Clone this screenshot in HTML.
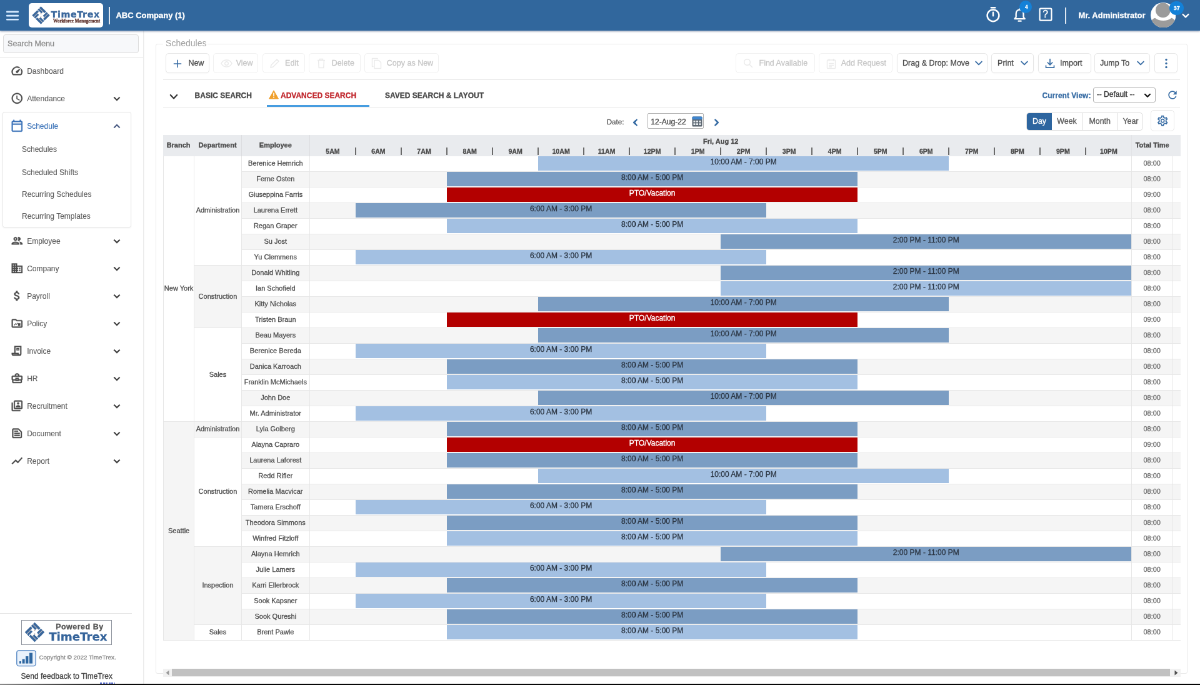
<!DOCTYPE html>
<html lang="en"><head><meta charset="utf-8"><title>TimeTrex - Schedules</title>
<style>
html,body{margin:0;padding:0;width:1200px;height:685px;overflow:hidden;background:#fff;}
body{font-family:"Liberation Sans",Arial,sans-serif;color:#444;}
#app{position:absolute;left:0;top:0;width:1920px;height:1096px;transform:scale(0.625);transform-origin:0 0;background:#fff;overflow:hidden;will-change:transform;-webkit-text-stroke:.3px;}
#app *{box-sizing:border-box;}
.abs{position:absolute;}
/* top bar */
#topbar{position:absolute;left:0;top:0;width:1920px;height:48.6px;background:#31679d;box-shadow:0 1px 3px rgba(25,50,95,.55);z-index:5;}
#topbar .logo{position:absolute;left:46px;top:4.8px;width:118.6px;height:39.6px;background:#fff;border-radius:5px;}
#topbar .vdiv{position:absolute;width:1.6px;background:#dfe8f2;}
#topbar .co{position:absolute;left:185.4px;top:0;height:48.6px;line-height:49.6px;font-size:13px;font-weight:bold;color:#fff;white-space:nowrap;}
#topbar .user{position:absolute;left:1725.4px;top:0;height:48.6px;line-height:49.6px;font-size:13px;font-weight:bold;color:#fff;white-space:nowrap;}
.badge{position:absolute;border-radius:50%;background:#1381d8;color:#fff;font-weight:bold;text-align:center;}
/* sidebar */
#sidebar{position:absolute;left:0;top:48.6px;width:229.6px;height:1048px;background:#fff;border-right:1.600px solid #ebebeb;box-shadow:1px 0 5px rgba(0,0,0,.07);}
#sidebar .search{position:absolute;left:5.3px;top:6.8px;width:217px;height:30px;border:1.3px solid #dcdcdc;border-radius:4px;background:#f7f8fa;font-size:12.600px;line-height:28.600px;padding-left:5.800px;color:#8c8c8c;}
#sidebar .hl{position:absolute;left:0;height:1.3px;background:#e4e4e4;}
.mi{position:absolute;left:0;width:229px;height:44px;line-height:44px;font-size:12px;color:#5c5c5c;white-space:nowrap;-webkit-text-stroke:.12px;}
.mi .tx{position:absolute;left:43.2px;top:0;}
.mi svg.ic{position:absolute;left:16.9px;top:11.7px;width:20.6px;height:20.6px;}
.mi svg.ch{position:absolute;left:177.2px;top:12.4px;width:20px;height:20px;}
.smi{position:absolute;left:35px;height:35px;line-height:35px;font-size:12px;color:#5c5c5c;white-space:nowrap;-webkit-text-stroke:.12px;}
.schedbox{position:absolute;left:3.8px;top:130.6px;width:206px;height:184.8px;border:1.3px solid #e6e6e6;border-radius:3px;box-shadow:0 1px 3px rgba(0,0,0,.05);}
/* content */
#content{position:absolute;left:231.2px;top:48.6px;width:1688.8px;height:1048px;background:#fff;}
.fs{position:absolute;left:249.3px;top:70px;width:1650.7px;height:1008px;border:1.4px solid #e9e9e9;border-radius:3px;}
.legend{position:absolute;left:260.5px;top:57.6px;padding:0 2px 0 4.600px;background:#fff;font-size:14px;line-height:22px;color:#a0a0a0;-webkit-text-stroke:0;}
.btn{position:absolute;top:84.8px;height:32.6px;border:1.3px solid #e6e6e6;border-radius:5px;background:#fff;font-size:12.5px;line-height:31.6px;color:#4a4a4a;white-space:nowrap;box-shadow:0 1px 2px rgba(0,0,0,.03);}
.btn.dis{color:#c6c6c6;border-color:#f0f0f0;box-shadow:none;}
.btn .tx{position:absolute;top:0;margin-left:-.9px;}
.btn svg{position:absolute;}
.hline{position:absolute;height:1.3px;background:#e6e6e6;}
.tab{position:absolute;top:141.8px;height:22px;line-height:22px;font-size:12px;font-weight:bold;color:#484848;white-space:nowrap;}
/* grid */
.grid{position:absolute;font-size:11px;color:#4c4c4c;}
.ghead{position:absolute;left:0;top:0;background:#e9ebee;}
.hc{position:absolute;top:0;height:100%;line-height:33px;text-align:center;font-weight:bold;font-size:11px;color:#4a4a4a;white-space:nowrap;}
.hc.hb{border-left:1.3px solid #dcdde0;border-right:1.3px solid #dcdde0;}
.hc.hl{border-left:1.3px solid #e2e3e6;}
.hdate{position:absolute;top:3px;height:14px;line-height:14px;text-align:center;font-weight:bold;font-size:11px;color:#4a4a4a;}
.hr{position:absolute;top:17.6px;height:16px;line-height:16px;text-align:center;font-weight:bold;font-size:10.6px;color:#4a4a4a;}
.sep{position:absolute;top:19.6px;width:1.8px;height:12.6px;background:#6a6a6a;}
.gbody{position:absolute;left:0;background:#fff;}
.row{position:absolute;left:0;width:100%;height:25px;border-bottom:1.3px solid #e7e7e7;background:#fff;}
.row.alt{background:#f5f5f5;}
.emp,.tt{position:absolute;top:0;height:25px;line-height:23.4px;text-align:center;white-space:nowrap;}
.emp{border-left:1.3px solid #e6e6e6;border-right:1.3px solid #e6e6e6;}
.tt{border-left:1.3px solid #e6e6e6;border-right:1.3px solid #e6e6e6;color:#6c6c6c;}
.bar{position:absolute;top:.3px;height:23.5px;line-height:18.8px;text-align:center;font-size:12px;color:#2b3542;white-space:nowrap;}
.bar.lt{background:#a3c0e2;}
.bar.dk{background:#7b9dc3;}
.bar.pto{background:#b30000;color:#fff;}
.mc{position:absolute;text-align:center;background:#fff;border-bottom:1.3px solid #e7e7e7;border-left:1.3px solid #e6e6e6;white-space:nowrap;}
.mc.alt{background:#f5f5f5;}
.pb{position:absolute;left:33.6px;top:943.4px;width:145.6px;height:39.6px;border:1.3px solid #8d929c;background:#fff;}
.pb1{left:54.600px;top:3px;font-size:12.400px;line-height:14px;font-weight:bold;color:#555;white-space:nowrap;letter-spacing:.55px}
.pb2{left:43.600px;top:15px;font-family:'DejaVu Sans','Liberation Sans',sans-serif;font-size:18.200px;line-height:22px;font-weight:bold;color:#35649b;white-space:nowrap;}
.seg{position:absolute;border:1.3px solid #dcdcdc;border-radius:5px;background:#fff;overflow:hidden;}
.sg{position:absolute;top:0;height:100%;line-height:26px;text-align:center;font-size:12.4px;color:#5a5a5a;border-right:1.3px solid #dcdcdc;}
.sg.on{background:#2d659f;color:#fff;border-right:none;}

</style></head>
<body>
<div id="app">
<div id="topbar">
<svg class="abs" style="left:7.800px;top:14px;width:26px;height:22px" viewBox="0 0 26 22"><g fill="#d6e9ff"><rect x="2" y="3.6" width="20" height="2.6" rx="1"/><rect x="2" y="9.8" width="20" height="2.6" rx="1"/><rect x="2" y="16" width="20" height="2.6" rx="1"/></g></svg>
<div class="logo">
<svg class="abs" style="left:3.4px;top:3.3px;width:33px;height:33px" viewBox="-16.5 -16.5 33 33"><g transform="rotate(45) scale(0.84)"><g fill="#3a679c"><rect x="-12" y="-12" width="14" height="4.200"/><rect x="-12" y="-7" width="10" height="3.800"/><rect x="7.800" y="-12" width="4.200" height="14"/><rect x="3.200" y="-12" width="3.800" height="10"/><rect x="-2" y="7.800" width="14" height="4.200"/><rect x="2" y="3.200" width="10" height="3.800"/><rect x="-12" y="-2" width="4.200" height="14"/><rect x="-7" y="2" width="3.800" height="10"/></g><g fill="#a9a3a8"><rect x="-12" y="-7.800" width="12" height=".8"/><rect x="7" y="-12" width=".8" height="12"/><rect x="0" y="7" width="12" height=".8"/><rect x="-7.800" y="0" width=".8" height="12"/><rect x="-3.200" y="-3.200" width="2" height="2" fill="#c3b3ad"/><rect x="1.200" y="1.200" width="2" height="2" fill="#c3b3ad"/></g></g></svg>
<div class="abs" style="left:35.600px;top:8.800px;font-family:'DejaVu Sans','Liberation Sans',sans-serif;font-size:14.300px;line-height:18px;font-weight:bold;color:#3a679c;letter-spacing:.62px;white-space:nowrap">TimeTrex</div>
<div class="abs" style="left:39px;top:24.800px;font-family:'Liberation Serif',serif;font-size:7.200px;line-height:9px;font-weight:bold;color:#5a2d27;white-space:nowrap">Workforce Management</div>
</div>
<div class="vdiv" style="left:174.4px;top:10.6px;height:28.4px"></div>
<div class="co">ABC Company (1)</div>
<!-- stopwatch -->
<svg class="abs" style="left:1575.200px;top:8px;width:28px;height:30px" viewBox="0 0 28 30" fill="none" stroke="#fff" stroke-width="2.500" stroke-linecap="round"><circle cx="14" cy="16.800" r="9.400"/><path d="M14 11.800v5.400M10.800 4.200h6.400" /></svg>
<!-- bell -->
<svg class="abs" style="left:1618.800px;top:10.800px;width:25.200px;height:27px" viewBox="0 0 28 30" fill="none" stroke="#fff" stroke-width="2.600" stroke-linejoin="round" stroke-linecap="round"><path d="M14 5.2c-4.3 0-6.6 3.2-6.6 7.2v5.8l-2.4 3h18l-2.4-3v-5.800c0-4-2.300-7.200-6.600-7.200zM14 3.400v1.600"/><path d="M11.800 25.200h4.400" stroke-width="2.6"/></svg>
<div class="badge" style="left:1631px;top:1.400px;width:20px;height:20px;line-height:20px;font-size:8.600px;padding-left:3px">4</div>
<!-- help -->
<svg class="abs" style="left:1658.600px;top:9.400px;width:28px;height:28px" viewBox="0 0 28 28" fill="none" stroke="#fff" stroke-width="2.200"><rect x="4.600" y="4.600" width="18.800" height="19" rx="1.500"/></svg>
<div class="abs" style="left:1658.600px;top:9.400px;width:28px;height:28px;line-height:28.400px;text-align:center;font-size:15.600px;font-weight:normal;color:#fff">?</div>
<div class="vdiv" style="left:1704px;top:12px;height:26px"></div>
<div class="user">Mr. Administrator</div>
<!-- avatar -->
<svg class="abs" style="left:1840.6px;top:3.8px;width:40.4px;height:40.4px" viewBox="0 0 40 40"><defs><clipPath id="avc"><circle cx="20" cy="20" r="20"/></clipPath></defs><g clip-path="url(#avc)"><rect width="40" height="40" fill="#fff"/><circle cx="19.600" cy="12.200" r="11.700" fill="#9b9b9b"/><path d="M-2 41c0-9 4-15.500 9-16.500 3.500 3 8 4.200 13 4.200s9.500-1.200 13-4.200c5 1 9 7.500 9 16.500z" fill="#9b9b9b"/></g></svg>
<div class="badge" style="left:1871.400px;top:1.600px;width:22.800px;height:22.800px;line-height:22.800px;font-size:9px">37</div>
<svg class="abs" style="left:1888px;top:17.600px;width:18px;height:14px" viewBox="0 0 18 14" fill="none" stroke="#fff" stroke-width="2.400" stroke-linecap="round" stroke-linejoin="round"><path d="M4.600 5l4.400 4.400 4.400-4.400"/></svg>
</div>
<div id="sidebar">
<div class="search">Search Menu</div>
<div class="hl" style="top:42px;width:229px"></div>
<div class="schedbox"></div>
<div class="mi" style="top:43px"><svg class="ic" viewBox="0 0 24 24" fill="#4a4a4a" stroke="#4a4a4a" stroke-width=".45" stroke-linejoin="round"><path d="M20.380 8.570l-1.230 1.850a8 8 0 0 1-.220 7.580H5.070A8 8 0 0 1 15.580 6.850l1.850-1.230A10 10 0 0 0 3.350 19a2 2 0 0 0 1.720 1h13.850a2 2 0 0 0 1.740-1 10 10 0 0 0-.270-10.440zm-9.790 6.840a2 2 0 0 0 2.830 0l5.660-8.490-8.490 5.660a2 2 0 0 0 0 2.830z"/></svg><span class="tx">Dashboard</span></div>
<div class="mi" style="top:87px"><svg class="ic" viewBox="0 0 24 24" fill="#4a4a4a" stroke="#4a4a4a" stroke-width=".45" stroke-linejoin="round"><path d="M11.990 2C6.470 2 2 6.480 2 12s4.470 10 9.990 10C17.520 22 22 17.520 22 12S17.520 2 11.990 2zM12 20c-4.420 0-8-3.580-8-8s3.580-8 8-8 8 3.580 8 8-3.580 8-8 8zm.5-13H11v6l5.250 3.150.750-1.230-4.500-2.670z"/></svg><span class="tx">Attendance</span><svg class="ch" viewBox="0 0 24 24" fill="#333" stroke="#333" stroke-width=".7"><path d="M16.590 8.590L12 13.170 7.410 8.590 6 10l6 6 6-6z"/></svg></div>
<div class="mi" style="top:131px;color:#3a72b8"><svg class="ic" viewBox="0 0 24 24" fill="#3a72b8" stroke="#3a72b8" stroke-width=".45" stroke-linejoin="round"><path d="M20 3h-1V1h-2v2H7V1H5v2H4c-1.100 0-2 .9-2 2v16c0 1.100.9 2 2 2h16c1.100 0 2-.9 2-2V5c0-1.100-.9-2-2-2zm0 18H4V10h16v11zm0-13H4V5h16v3z"/></svg><span class="tx">Schedule</span><svg class="ch" viewBox="0 0 24 24" fill="#3d4f7a" stroke="#3d4f7a" stroke-width=".7"><path d="M12 8l-6 6 1.410 1.410L12 10.830l4.590 4.580L18 14z"/></svg></div>
<div class="mi" style="top:315px"><svg class="ic" viewBox="0 0 24 24" fill="#4a4a4a" stroke="#4a4a4a" stroke-width=".45" stroke-linejoin="round"><path d="M9 13.750c-2.340 0-7 1.170-7 3.500V19h14v-1.750c0-2.330-4.660-3.500-7-3.500zM4.340 17c.840-.580 2.870-1.250 4.660-1.250s3.820.670 4.660 1.250H4.340zM9 12c1.930 0 3.500-1.570 3.500-3.500S10.930 5 9 5 5.500 6.570 5.500 8.500 7.070 12 9 12zm0-5c.830 0 1.500.670 1.500 1.500S9.830 10 9 10s-1.500-.670-1.500-1.500S8.170 7 9 7zm7.040 6.810c1.160.840 1.960 1.960 1.960 3.440V19h4v-1.750c0-2.020-3.500-3.170-5.960-3.440zM15 12c1.930 0 3.500-1.570 3.500-3.500S16.930 5 15 5c-.540 0-1.040.130-1.500.350.630.890 1 1.980 1 3.150s-.370 2.260-1 3.150c.460.220.960.350 1.500.350z"/></svg><span class="tx">Employee</span><svg class="ch" viewBox="0 0 24 24" fill="#333" stroke="#333" stroke-width=".7"><path d="M16.590 8.590L12 13.170 7.410 8.590 6 10l6 6 6-6z"/></svg></div>
<div class="mi" style="top:359px"><svg class="ic" viewBox="0 0 24 24" fill="#4a4a4a" stroke="#4a4a4a" stroke-width=".45" stroke-linejoin="round"><path d="M12 7V3H2v18h20V7H12zM6 19H4v-2h2v2zm0-4H4v-2h2v2zm0-4H4V9h2v2zm0-4H4V5h2v2zm4 12H8v-2h2v2zm0-4H8v-2h2v2zm0-4H8V9h2v2zm0-4H8V5h2v2zm10 12h-8v-2h2v-2h-2v-2h2v-2h-2V9h8v10zm-2-8h-2v2h2v-2zm0 4h-2v2h2v-2z"/></svg><span class="tx">Company</span><svg class="ch" viewBox="0 0 24 24" fill="#333" stroke="#333" stroke-width=".7"><path d="M16.590 8.590L12 13.170 7.410 8.590 6 10l6 6 6-6z"/></svg></div>
<div class="mi" style="top:403px"><svg class="ic" viewBox="0 0 24 24" fill="#4a4a4a" stroke="#4a4a4a" stroke-width=".45" stroke-linejoin="round"><path d="M11.800 10.900c-2.270-.590-3-1.200-3-2.150 0-1.090 1.010-1.850 2.700-1.850 1.780 0 2.440.850 2.500 2.100h2.210c-.070-1.720-1.120-3.300-3.210-3.810V3h-3v2.160c-1.940.420-3.500 1.680-3.500 3.610 0 2.310 1.910 3.460 4.700 4.130 2.500.600 3 1.480 3 2.410 0 .690-.490 1.790-2.700 1.790-2.060 0-2.870-.920-2.980-2.100h-2.200c.120 2.190 1.760 3.420 3.680 3.830V21h3v-2.150c1.950-.370 3.500-1.500 3.500-3.550 0-2.840-2.430-3.810-4.700-4.400z"/></svg><span class="tx">Payroll</span><svg class="ch" viewBox="0 0 24 24" fill="#333" stroke="#333" stroke-width=".7"><path d="M16.590 8.590L12 13.170 7.410 8.590 6 10l6 6 6-6z"/></svg></div>
<div class="mi" style="top:447px"><svg class="ic" viewBox="0 0 24 24" fill="#4a4a4a" stroke="#4a4a4a" stroke-width=".45" stroke-linejoin="round"><path d="M20 6h-8l-2-2H4c-1.100 0-1.990.9-1.990 2L2 18c0 1.100.9 2 2 2h16c1.100 0 2-.9 2-2V8c0-1.100-.9-2-2-2zm0 12H4V6h5.170l2 2H20v10z"/><path d="M6.500 14.800l3-3 1.600 1.400 2-2.200v1.400l-2 2.300-1.600-1.400-3 2.900z"/><rect x="14" y="12" width="4" height="4.500"/></svg><span class="tx">Policy</span><svg class="ch" viewBox="0 0 24 24" fill="#333" stroke="#333" stroke-width=".7"><path d="M16.590 8.590L12 13.170 7.410 8.590 6 10l6 6 6-6z"/></svg></div>
<div class="mi" style="top:491px"><svg class="ic" viewBox="0 0 24 24" fill="#4a4a4a" stroke="#4a4a4a" stroke-width=".45" stroke-linejoin="round"><path d="M7 3h13v15a3 3 0 0 1-3 3H5a3 3 0 0 1-3-3v-2h5V3zm2 2v11h6v2a1 1 0 0 0 2 0h1V5H9zM4 18a1 1 0 0 0 1 1h8.200a3 3 0 0 1-.200-1H4z"/><path d="M11 7h5v4h-5zM12.300 8.200v1.600h2.400V8.200z" fill-rule="evenodd"/></svg><span class="tx">Invoice</span><svg class="ch" viewBox="0 0 24 24" fill="#333" stroke="#333" stroke-width=".7"><path d="M16.590 8.590L12 13.170 7.410 8.590 6 10l6 6 6-6z"/></svg></div>
<div class="mi" style="top:535px"><svg class="ic" viewBox="0 0 24 24" fill="#4a4a4a" stroke="#4a4a4a" stroke-width=".45" stroke-linejoin="round"><path d="M20 7h-4V5l-2-2h-4L8 5v2H4c-1.100 0-2 .9-2 2v5c0 .750.400 1.380 1 1.730V19c0 1.110.890 2 2 2h14c1.110 0 2-.890 2-2v-3.280c.590-.350 1-.990 1-1.720V9c0-1.100-.9-2-2-2zM10 5h4v2h-4V5zM4 9h16v5h-5v-3H9v3H4V9zm9 6h-2v-2h2v2zm6 4H5v-3h4v1h6v-1h4v3z"/></svg><span class="tx">HR</span><svg class="ch" viewBox="0 0 24 24" fill="#333" stroke="#333" stroke-width=".7"><path d="M16.590 8.590L12 13.170 7.410 8.590 6 10l6 6 6-6z"/></svg></div>
<div class="mi" style="top:579px"><svg class="ic" viewBox="0 0 24 24" fill="#4a4a4a" stroke="#4a4a4a" stroke-width=".45" stroke-linejoin="round"><path d="M4 6H2v14c0 1.100.9 2 2 2h14v-2H4V6z"/><path d="M20 2H8c-1.100 0-2 .9-2 2v12c0 1.100.9 2 2 2h12c1.100 0 2-.9 2-2V4c0-1.100-.9-2-2-2zm0 14H8V4h12v12z"/><path d="M14 5.500a2 2 0 1 1 0 4 2 2 0 0 1 0-4zM10 13.300c0-1.400 2.700-2.100 4-2.100s4 .700 4 2.100V14.500h-8z"/></svg><span class="tx">Recruitment</span><svg class="ch" viewBox="0 0 24 24" fill="#333" stroke="#333" stroke-width=".7"><path d="M16.590 8.590L12 13.170 7.410 8.590 6 10l6 6 6-6z"/></svg></div>
<div class="mi" style="top:623px"><svg class="ic" viewBox="0 0 24 24" fill="#4a4a4a" stroke="#4a4a4a" stroke-width=".45" stroke-linejoin="round"><path d="M14.170 5L19 9.830V19H5V5h9.170m0-2H5c-1.100 0-2 .9-2 2v14c0 1.100.9 2 2 2h14c1.100 0 2-.9 2-2V9.830c0-.530-.210-1.040-.590-1.410l-4.830-4.830c-.370-.380-.880-.590-1.410-.590zM7 15h10v2H7v-2zm0-4h10v2H7v-2zm0-4h7v2H7V7z"/></svg><span class="tx">Document</span><svg class="ch" viewBox="0 0 24 24" fill="#333" stroke="#333" stroke-width=".7"><path d="M16.590 8.590L12 13.170 7.410 8.590 6 10l6 6 6-6z"/></svg></div>
<div class="mi" style="top:667px"><svg class="ic" viewBox="0 0 24 24" fill="#4a4a4a" stroke="#4a4a4a" stroke-width=".45" stroke-linejoin="round"><path d="M3.500 18.490l6-6.010 4 4L22 6.920l-1.410-1.410-7.090 7.970-4-4L2 16.990z"/></svg><span class="tx">Report</span><svg class="ch" viewBox="0 0 24 24" fill="#333" stroke="#333" stroke-width=".7"><path d="M16.590 8.590L12 13.170 7.410 8.590 6 10l6 6 6-6z"/></svg></div>
<div class="smi" style="top:173.7px">Schedules</div>
<div class="smi" style="top:210px">Scheduled Shifts</div>
<div class="smi" style="top:245.1px">Recurring Schedules</div>
<div class="smi" style="top:280.3px">Recurring Templates</div>
<div class="hl" style="top:932.6px;width:211px"></div>
<div class="pb"><svg class="abs" style="left:4.200px;top:2.200px;width:33px;height:33px" viewBox="-16.500 -16.500 33 33"><g transform="rotate(45) scale(0.93)"><g fill="#3a679c"><rect x="-12" y="-12" width="14" height="4.200"/><rect x="-12" y="-7" width="10" height="3.800"/><rect x="7.800" y="-12" width="4.200" height="14"/><rect x="3.200" y="-12" width="3.800" height="10"/><rect x="-2" y="7.800" width="14" height="4.200"/><rect x="2" y="3.200" width="10" height="3.800"/><rect x="-12" y="-2" width="4.200" height="14"/><rect x="-7" y="2" width="3.800" height="10"/></g><g fill="#a9a3a8"><rect x="-12" y="-7.800" width="12" height=".8"/><rect x="7" y="-12" width=".8" height="12"/><rect x="0" y="7" width="12" height=".8"/><rect x="-7.800" y="0" width=".8" height="12"/><rect x="-3.200" y="-3.200" width="2" height="2" fill="#c3b3ad"/><rect x="1.200" y="1.200" width="2" height="2" fill="#c3b3ad"/></g></g></svg><div class="abs pb1">Powered By</div><div class="abs pb2">TimeTrex</div></div>
<svg class="abs" style="left:25.6px;top:991.6px;width:32px;height:26.4px" viewBox="0 0 32 26.4"><rect x=".8" y=".8" width="30.400" height="24.800" rx="3.500" fill="#eaf2fb" stroke="#4a7fc0" stroke-width="1.300"/><g fill="#2f67a1"><rect x="5" y="18" width="3" height="3.600"/><rect x="9.600" y="14.600" width="4" height="7"/><rect x="15" y="10" width="4.400" height="11.600"/><rect x="21" y="4.600" width="5" height="17"/></g></svg>
<div class="abs" style="left:62.4px;top:995px;font-size:9.9px;line-height:16px;color:#8a8a8a;white-space:nowrap">Copyright © 2022 TimeTrex.</div>
<div class="abs" style="left:33.6px;top:1024px;font-size:12px;line-height:18px;color:#444;white-space:nowrap">Send feedback to TimeTrex</div>
</div>
<div id="content"></div>
<div class="fs"></div>
<div class="legend">Schedules</div>
<div class="btn" style="left:264.6px;width:70.8px"><svg style="left:11.6px;top:9px;width:14px;height:14px" viewBox="0 0 14 14" stroke="#3a6ea5" stroke-width="1.600" stroke-linecap="round"><path d="M7 1.400v11.200M1.400 7h11.200"/></svg><span class="tx" style="left:36.7px">New</span></div>
<div class="btn dis" style="left:341.3px;width:72.0px"><svg style="left:10.7px;top:8px;width:19px;height:15px" viewBox="0 0 19 15" fill="none" stroke="#eaeaea" stroke-width="1.400"><path d="M1 7.500C3 3.500 6 2 9.500 2s6.500 1.500 8.500 5.500c-2 4-5 5.500-8.500 5.500S3 11.500 1 7.500z"/><circle cx="9.500" cy="7.500" r="2.800"/></svg><span class="tx" style="left:36.3px">View</span></div>
<div class="btn dis" style="left:420.3px;width:67.7px"><svg style="left:10.1px;top:7.500px;width:17px;height:17px" viewBox="0 0 17 17" fill="none" stroke="#eaeaea" stroke-width="1.500" stroke-linejoin="round"><path d="M2 15l1-4 9-9 3 3-9 9z"/></svg><span class="tx" style="left:35.7px">Edit</span></div>
<div class="btn dis" style="left:494px;width:83.0px"><svg style="left:12.0px;top:7px;width:14px;height:17px" viewBox="0 0 14 17" fill="none" stroke="#eaeaea" stroke-width="1.400"><path d="M1 3.500h12M4.500 3.500v-2h5v2M2.500 3.500l.7 12h7.600l.7-12"/></svg><span class="tx" style="left:36.7px">Delete</span></div>
<div class="btn dis" style="left:583px;width:119.0px"><svg style="left:10.0px;top:6.500px;width:17px;height:19px" viewBox="0 0 17 19" fill="none" stroke="#eaeaea" stroke-width="1.400" stroke-linejoin="round"><path d="M5 4.500h7l3.500 3.500v9.500h-10.500z"/><path d="M3.500 14.500h-2v-13h8.500v1.500"/></svg><span class="tx" style="left:35.7px">Copy as New</span></div>
<div class="btn dis" style="left:1177px;width:127.0px"><svg style="left:11.0px;top:7.500px;width:16px;height:16px" viewBox="0 0 16 16" fill="none" stroke="#eaeaea" stroke-width="1.500" stroke-linecap="round"><circle cx="6.500" cy="6.500" r="4.800"/><path d="M10.200 10.200l4.300 4.300"/></svg><span class="tx" style="left:37.4px">Find Available</span></div>
<div class="btn dis" style="left:1310px;width:118.3px"><svg style="left:11.0px;top:7px;width:16px;height:18px" viewBox="0 0 16 18" fill="none" stroke="#eaeaea" stroke-width="1.400"><rect x="1.500" y="3" width="13" height="13.500" rx="1"/><path d="M4.500 1v4M11.500 1v4M4 8.500h8M4 11.500h8M4 14h5"/></svg><span class="tx" style="left:35.6px">Add Request</span></div>
<div class="btn" style="left:1434.7px;width:145.3px"><span class="tx" style="left:9.3px">Drag &amp; Drop: Move</span><svg style="left:122.9px;top:9px;width:14px;height:12px" viewBox="0 0 14 12" fill="none" stroke="#3a6ea5" stroke-width="1.900" stroke-linecap="round" stroke-linejoin="round"><path d="M2.200 3.600l4.800 4.800 4.800-4.800"/></svg></div>
<div class="btn" style="left:1586px;width:68.0px"><span class="tx" style="left:10.0px">Print</span><svg style="left:45.0px;top:9px;width:14px;height:12px" viewBox="0 0 14 12" fill="none" stroke="#3a6ea5" stroke-width="1.900" stroke-linecap="round" stroke-linejoin="round"><path d="M2.200 3.600l4.800 4.800 4.800-4.800"/></svg></div>
<div class="btn" style="left:1660.8px;width:85.2px"><svg style="left:10.2px;top:7px;width:16px;height:17px" viewBox="0 0 16 17" fill="none" stroke="#3a6ea5" stroke-width="1.700" stroke-linecap="round" stroke-linejoin="round"><path d="M8 1.500v9M4.200 7l3.800 3.800L11.800 7M1.500 12v3.200h13V12"/></svg><span class="tx" style="left:35.2px">Import</span></div>
<div class="btn" style="left:1751px;width:89.0px"><span class="tx" style="left:9.0px">Jump To</span><svg style="left:66.0px;top:9px;width:14px;height:12px" viewBox="0 0 14 12" fill="none" stroke="#3a6ea5" stroke-width="1.900" stroke-linecap="round" stroke-linejoin="round"><path d="M2.200 3.600l4.800 4.800 4.800-4.800"/></svg></div>
<div class="btn" style="left:1847px;width:37.0px"><svg style="left:15.2px;top:7.500px;width:6px;height:17px" viewBox="0 0 6 17" fill="#3a6ea5"><circle cx="3" cy="2.500" r="1.700"/><circle cx="3" cy="8.500" r="1.700"/><circle cx="3" cy="14.500" r="1.700"/></svg></div>
<div class="hline" style="left:260.8px;top:126.8px;width:1627px"></div>
<svg class="abs" style="left:269.600px;top:147.600px;width:16px;height:14px" viewBox="0 0 16 14" fill="none" stroke="#333" stroke-width="2.200" stroke-linecap="round" stroke-linejoin="round"><path d="M2.800 4l5.200 5.400L13.200 4"/></svg>
<div class="tab" style="left:311.6px">BASIC SEARCH</div>
<svg class="abs" style="left:429.6px;top:143.6px;width:16px;height:15px" viewBox="0 0 16 15"><path d="M8 .8L15.400 14H.6z" fill="#f0a02c" stroke="#f0a02c" stroke-width="1" stroke-linejoin="round"/><path d="M8 5v4.600" stroke="#fff" stroke-width="1.600" stroke-linecap="round"/><circle cx="8" cy="11.800" r=".95" fill="#fff"/></svg>
<div class="tab" style="left:449px;color:#c0272d">ADVANCED SEARCH</div>
<div class="abs" style="left:426.7px;top:168.4px;width:164.3px;height:2.200px;background:#479de0"></div>
<div class="tab" style="left:616px">SAVED SEARCH &amp; LAYOUT</div>
<div class="hline" style="left:260.8px;top:170.6px;width:1627px"></div>
<div class="tab" style="left:1667.6px;color:#3a6ea5">Current View:</div>
<div class="abs" style="left:1748.8px;top:140px;width:100px;height:24px;border:1.300px solid #b0b0b0;border-radius:3px;background:#fff;font-size:12px;line-height:21.400px;color:#333;padding-left:5px;white-space:nowrap">-- Default --<svg class="abs" style="left:80px;top:6.500px;width:12px;height:10px" viewBox="0 0 12 10" fill="none" stroke="#111" stroke-width="2.200" stroke-linecap="round" stroke-linejoin="round"><path d="M2 2.800l4 4 4-4"/></svg></div>
<svg class="abs" style="left:1866px;top:142px;width:20px;height:20px" viewBox="0 0 24 24" fill="#3a6ea5"><path d="M17.650 6.350A7.958 7.958 0 0 0 12 4c-4.420 0-7.990 3.580-7.990 8s3.570 8 7.990 8c3.730 0 6.840-2.550 7.730-6h-2.080A5.990 5.990 0 0 1 12 18c-3.310 0-6-2.690-6-6s2.690-6 6-6c1.660 0 3.140.690 4.220 1.780L13 11h7V4l-2.350 2.350z"/></svg>
<div class="abs" style="left:970.7px;top:184px;font-size:11.600px;line-height:21px;color:#555;white-space:nowrap">Date:</div>
<svg class="abs" style="left:1009.5px;top:187.600px;width:13px;height:16px" viewBox="0 0 13 16" fill="none" stroke="#3a6ea5" stroke-width="2.500" stroke-linecap="round" stroke-linejoin="round"><path d="M8.600 3.600L4.200 8 8.600 12.400"/></svg>
<div class="abs" style="left:1035.7px;top:181.300px;width:90.700px;height:24.400px;border:1.300px solid #b0b0b0;border-radius:2px;background:#fff;font-size:12.100px;line-height:26.400px;color:#444;padding-left:4.600px;white-space:nowrap">12-Aug-22<svg class="abs" style="left:70px;top:3.200px;width:17px;height:18px" viewBox="0 0 17 17" preserveAspectRatio="none"><rect x=".5" y="1.500" width="16" height="15" rx="1.500" fill="#5c6670"/><rect x=".5" y="1.500" width="16" height="4.500" rx="1.500" fill="#3f86cf"/><g fill="#e9edf1"><rect x="2.500" y="7.500" width="3" height="2.600"/><rect x="7" y="7.500" width="3" height="2.600"/><rect x="11.500" y="7.500" width="3" height="2.600"/><rect x="2.500" y="11.600" width="3" height="2.600"/><rect x="7" y="11.600" width="3" height="2.600"/><rect x="11.500" y="11.600" width="3" height="2.600"/></g></svg></div>
<svg class="abs" style="left:1140.2px;top:187.600px;width:13px;height:16px" viewBox="0 0 13 16" fill="none" stroke="#3a6ea5" stroke-width="2.500" stroke-linecap="round" stroke-linejoin="round"><path d="M4.400 3.600L8.800 8 4.400 12.400"/></svg>
<div class="seg" style="left:1642px;top:180px;width:186.800px;height:28.800px"><div class="sg on" style="left:0;width:40px">Day</div><div class="sg" style="left:40px;width:49.200px">Week</div><div class="sg" style="left:89.200px;width:56px">Month</div><div class="sg" style="left:145.200px;width:41.600px;border-right:none">Year</div></div>
<div class="abs" style="left:1841.300px;top:176.400px;width:37.600px;height:33.600px;border:1.300px solid #e6e6e6;border-radius:5px;background:#fff"><svg class="abs" style="left:7.700px;top:5.600px;width:20.400px;height:20.400px" viewBox="0 0 24 24" fill="#3a6ea5"><path d="M19.430 12.980c.040-.320.070-.640.070-.980 0-.340-.030-.660-.070-.980l2.110-1.650c.190-.150.240-.420.120-.640l-2-3.460a.5.500 0 0 0-.610-.220l-2.490 1c-.520-.4-1.080-.730-1.690-.980l-.380-2.650A.488.488 0 0 0 14 2h-4c-.250 0-.460.180-.490.420l-.380 2.650c-.610.250-1.170.590-1.690.980l-2.490-1a.566.566 0 0 0-.180-.030c-.170 0-.340.090-.430.250l-2 3.460c-.130.220-.070.490.120.640l2.110 1.650c-.040.320-.070.650-.070.980 0 .330.030.660.070.980l-2.110 1.650c-.190.150-.240.420-.120.640l2 3.460a.5.5 0 0 0 .610.220l2.490-1c.520.4 1.080.730 1.690.980l.380 2.650c.030.240.240.420.490.420h4c.250 0 .460-.180.490-.420l.380-2.650c.610-.250 1.170-.590 1.690-.980l2.490 1c.060.020.120.030.180.030.170 0 .340-.090.430-.250l2-3.460c.120-.220.070-.490-.120-.640l-2.110-1.650zm-1.980-1.710c.040.310.050.520.050.730 0 .210-.020.430-.050.730l-.140 1.130.890.700 1.080.840-.7 1.210-1.270-.510-1.040-.420-.9.680c-.430.320-.840.560-1.250.730l-1.060.430-.160 1.130-.200 1.350h-1.400l-.190-1.350-.160-1.130-1.060-.430c-.430-.180-.830-.410-1.230-.710l-.910-.7-1.060.430-1.270.510-.7-1.210 1.080-.840.890-.7-.140-1.130c-.030-.310-.050-.540-.050-.740s.020-.430.050-.730l.140-1.130-.890-.7-1.080-.840.7-1.210 1.270.510 1.040.420.900-.680c.430-.320.840-.560 1.250-.730l1.060-.430.160-1.130.200-1.350h1.390l.190 1.350.160 1.130 1.060.430c.430.180.830.410 1.230.710l.910.7 1.060-.430 1.270-.510.7 1.210-1.070.850-.890.7.140 1.130zM12 8c-2.210 0-4 1.790-4 4s1.790 4 4 4 4-1.790 4-4-1.790-4-4-4zm0 6c-1.100 0-2-.9-2-2s.9-2 2-2 2 .9 2 2-.9 2-2 2z"/></svg></div>
<div class="grid" style="left:260.8px;top:216.0px;width:1627.8px;">
<div class="ghead" style="height:33.7px;width:1627.8px">
<div class="hc" style="left:0;width:49.6px">Branch</div>
<div class="hc" style="left:49.6px;width:75.2px">Department</div>
<div class="hc hb" style="left:124.80000000000001px;width:110.4px">Employee</div>
<div class="hdate" style="left:235.2px;width:1314.4px">Fri, Aug 12</div>
<div class="hr" style="left:235.20px;width:73.02px">5AM</div>
<div class="hr" style="left:308.22px;width:73.02px">6AM</div>
<div class="sep" style="left:307.22px"></div>
<div class="hr" style="left:381.24px;width:73.02px">7AM</div>
<div class="sep" style="left:380.24px"></div>
<div class="hr" style="left:454.27px;width:73.02px">8AM</div>
<div class="sep" style="left:453.27px"></div>
<div class="hr" style="left:527.29px;width:73.02px">9AM</div>
<div class="sep" style="left:526.29px"></div>
<div class="hr" style="left:600.31px;width:73.02px">10AM</div>
<div class="sep" style="left:599.31px"></div>
<div class="hr" style="left:673.33px;width:73.02px">11AM</div>
<div class="sep" style="left:672.33px"></div>
<div class="hr" style="left:746.36px;width:73.02px">12PM</div>
<div class="sep" style="left:745.36px"></div>
<div class="hr" style="left:819.38px;width:73.02px">1PM</div>
<div class="sep" style="left:818.38px"></div>
<div class="hr" style="left:892.40px;width:73.02px">2PM</div>
<div class="sep" style="left:891.40px"></div>
<div class="hr" style="left:965.42px;width:73.02px">3PM</div>
<div class="sep" style="left:964.42px"></div>
<div class="hr" style="left:1038.44px;width:73.02px">4PM</div>
<div class="sep" style="left:1037.44px"></div>
<div class="hr" style="left:1111.47px;width:73.02px">5PM</div>
<div class="sep" style="left:1110.47px"></div>
<div class="hr" style="left:1184.49px;width:73.02px">6PM</div>
<div class="sep" style="left:1183.49px"></div>
<div class="hr" style="left:1257.51px;width:73.02px">7PM</div>
<div class="sep" style="left:1256.51px"></div>
<div class="hr" style="left:1330.53px;width:73.02px">8PM</div>
<div class="sep" style="left:1329.53px"></div>
<div class="hr" style="left:1403.56px;width:73.02px">9PM</div>
<div class="sep" style="left:1402.56px"></div>
<div class="hr" style="left:1476.58px;width:73.02px">10PM</div>
<div class="sep" style="left:1475.58px"></div>
<div class="hc hl" style="left:1549.6000000000001px;width:65.6px">Total Time</div>
</div>
<div class="gbody" style="top:33.7px;width:1627.8px;height:775.00px">
<div class="row" style="top:0.00px"><div class="emp" style="left:124.80000000000001px;width:110.4px">Berenice Hemrich</div><div class="bar lt" style="left:600.31px;width:657.20px">10:00 AM - 7:00 PM</div><div class="tt" style="left:1549.6000000000001px;width:65.6px">08:00</div></div>
<div class="row alt" style="top:25.00px"><div class="emp" style="left:124.80000000000001px;width:110.4px">Ferne Osten</div><div class="bar dk" style="left:454.27px;width:657.20px">8:00 AM - 5:00 PM</div><div class="tt" style="left:1549.6000000000001px;width:65.6px">08:00</div></div>
<div class="row" style="top:50.00px"><div class="emp" style="left:124.80000000000001px;width:110.4px">Giuseppina Farris</div><div class="bar pto" style="left:454.27px;width:657.20px">PTO/Vacation</div><div class="tt" style="left:1549.6000000000001px;width:65.6px">09:00</div></div>
<div class="row alt" style="top:75.00px"><div class="emp" style="left:124.80000000000001px;width:110.4px">Laurena Errett</div><div class="bar dk" style="left:308.22px;width:657.20px">6:00 AM - 3:00 PM</div><div class="tt" style="left:1549.6000000000001px;width:65.6px">08:00</div></div>
<div class="row" style="top:100.00px"><div class="emp" style="left:124.80000000000001px;width:110.4px">Regan Graper</div><div class="bar lt" style="left:454.27px;width:657.20px">8:00 AM - 5:00 PM</div><div class="tt" style="left:1549.6000000000001px;width:65.6px">08:00</div></div>
<div class="row alt" style="top:125.00px"><div class="emp" style="left:124.80000000000001px;width:110.4px">Su Jost</div><div class="bar dk" style="left:892.40px;width:657.20px">2:00 PM - 11:00 PM</div><div class="tt" style="left:1549.6000000000001px;width:65.6px">08:00</div></div>
<div class="row" style="top:150.00px"><div class="emp" style="left:124.80000000000001px;width:110.4px">Yu Clemmens</div><div class="bar lt" style="left:308.22px;width:657.20px">6:00 AM - 3:00 PM</div><div class="tt" style="left:1549.6000000000001px;width:65.6px">08:00</div></div>
<div class="row alt" style="top:175.00px"><div class="emp" style="left:124.80000000000001px;width:110.4px">Donald Whitling</div><div class="bar dk" style="left:892.40px;width:657.20px">2:00 PM - 11:00 PM</div><div class="tt" style="left:1549.6000000000001px;width:65.6px">08:00</div></div>
<div class="row" style="top:200.00px"><div class="emp" style="left:124.80000000000001px;width:110.4px">Ian Schofield</div><div class="bar lt" style="left:892.40px;width:657.20px">2:00 PM - 11:00 PM</div><div class="tt" style="left:1549.6000000000001px;width:65.6px">08:00</div></div>
<div class="row alt" style="top:225.00px"><div class="emp" style="left:124.80000000000001px;width:110.4px">Kitty Nicholas</div><div class="bar dk" style="left:600.31px;width:657.20px">10:00 AM - 7:00 PM</div><div class="tt" style="left:1549.6000000000001px;width:65.6px">08:00</div></div>
<div class="row" style="top:250.00px"><div class="emp" style="left:124.80000000000001px;width:110.4px">Tristen Braun</div><div class="bar pto" style="left:454.27px;width:657.20px">PTO/Vacation</div><div class="tt" style="left:1549.6000000000001px;width:65.6px">09:00</div></div>
<div class="row alt" style="top:275.00px"><div class="emp" style="left:124.80000000000001px;width:110.4px">Beau Mayers</div><div class="bar dk" style="left:600.31px;width:657.20px">10:00 AM - 7:00 PM</div><div class="tt" style="left:1549.6000000000001px;width:65.6px">08:00</div></div>
<div class="row" style="top:300.00px"><div class="emp" style="left:124.80000000000001px;width:110.4px">Berenice Bereda</div><div class="bar lt" style="left:308.22px;width:657.20px">6:00 AM - 3:00 PM</div><div class="tt" style="left:1549.6000000000001px;width:65.6px">08:00</div></div>
<div class="row alt" style="top:325.00px"><div class="emp" style="left:124.80000000000001px;width:110.4px">Danica Karroach</div><div class="bar dk" style="left:454.27px;width:657.20px">8:00 AM - 5:00 PM</div><div class="tt" style="left:1549.6000000000001px;width:65.6px">08:00</div></div>
<div class="row" style="top:350.00px"><div class="emp" style="left:124.80000000000001px;width:110.4px">Franklin McMichaels</div><div class="bar lt" style="left:454.27px;width:657.20px">8:00 AM - 5:00 PM</div><div class="tt" style="left:1549.6000000000001px;width:65.6px">08:00</div></div>
<div class="row alt" style="top:375.00px"><div class="emp" style="left:124.80000000000001px;width:110.4px">John Doe</div><div class="bar dk" style="left:600.31px;width:657.20px">10:00 AM - 7:00 PM</div><div class="tt" style="left:1549.6000000000001px;width:65.6px">08:00</div></div>
<div class="row" style="top:400.00px"><div class="emp" style="left:124.80000000000001px;width:110.4px">Mr. Administrator</div><div class="bar lt" style="left:308.22px;width:657.20px">6:00 AM - 3:00 PM</div><div class="tt" style="left:1549.6000000000001px;width:65.6px">08:00</div></div>
<div class="row alt" style="top:425.00px"><div class="emp" style="left:124.80000000000001px;width:110.4px">Lyla Golberg</div><div class="bar dk" style="left:454.27px;width:657.20px">8:00 AM - 5:00 PM</div><div class="tt" style="left:1549.6000000000001px;width:65.6px">08:00</div></div>
<div class="row" style="top:450.00px"><div class="emp" style="left:124.80000000000001px;width:110.4px">Alayna Capraro</div><div class="bar pto" style="left:454.27px;width:657.20px">PTO/Vacation</div><div class="tt" style="left:1549.6000000000001px;width:65.6px">09:00</div></div>
<div class="row alt" style="top:475.00px"><div class="emp" style="left:124.80000000000001px;width:110.4px">Laurena Laforest</div><div class="bar dk" style="left:454.27px;width:657.20px">8:00 AM - 5:00 PM</div><div class="tt" style="left:1549.6000000000001px;width:65.6px">08:00</div></div>
<div class="row" style="top:500.00px"><div class="emp" style="left:124.80000000000001px;width:110.4px">Redd Rifler</div><div class="bar lt" style="left:600.31px;width:657.20px">10:00 AM - 7:00 PM</div><div class="tt" style="left:1549.6000000000001px;width:65.6px">08:00</div></div>
<div class="row alt" style="top:525.00px"><div class="emp" style="left:124.80000000000001px;width:110.4px">Romelia Macvicar</div><div class="bar dk" style="left:454.27px;width:657.20px">8:00 AM - 5:00 PM</div><div class="tt" style="left:1549.6000000000001px;width:65.6px">08:00</div></div>
<div class="row" style="top:550.00px"><div class="emp" style="left:124.80000000000001px;width:110.4px">Tamera Erschoff</div><div class="bar lt" style="left:308.22px;width:657.20px">6:00 AM - 3:00 PM</div><div class="tt" style="left:1549.6000000000001px;width:65.6px">08:00</div></div>
<div class="row alt" style="top:575.00px"><div class="emp" style="left:124.80000000000001px;width:110.4px">Theodora Simmons</div><div class="bar dk" style="left:454.27px;width:657.20px">8:00 AM - 5:00 PM</div><div class="tt" style="left:1549.6000000000001px;width:65.6px">08:00</div></div>
<div class="row" style="top:600.00px"><div class="emp" style="left:124.80000000000001px;width:110.4px">Winfred Fitzloff</div><div class="bar lt" style="left:454.27px;width:657.20px">8:00 AM - 5:00 PM</div><div class="tt" style="left:1549.6000000000001px;width:65.6px">08:00</div></div>
<div class="row alt" style="top:625.00px"><div class="emp" style="left:124.80000000000001px;width:110.4px">Alayna Hemrich</div><div class="bar dk" style="left:892.40px;width:657.20px">2:00 PM - 11:00 PM</div><div class="tt" style="left:1549.6000000000001px;width:65.6px">08:00</div></div>
<div class="row" style="top:650.00px"><div class="emp" style="left:124.80000000000001px;width:110.4px">Julie Lamers</div><div class="bar lt" style="left:308.22px;width:657.20px">6:00 AM - 3:00 PM</div><div class="tt" style="left:1549.6000000000001px;width:65.6px">08:00</div></div>
<div class="row alt" style="top:675.00px"><div class="emp" style="left:124.80000000000001px;width:110.4px">Karri Ellerbrock</div><div class="bar dk" style="left:454.27px;width:657.20px">8:00 AM - 5:00 PM</div><div class="tt" style="left:1549.6000000000001px;width:65.6px">08:00</div></div>
<div class="row" style="top:700.00px"><div class="emp" style="left:124.80000000000001px;width:110.4px">Sook Kapsner</div><div class="bar lt" style="left:308.22px;width:657.20px">6:00 AM - 3:00 PM</div><div class="tt" style="left:1549.6000000000001px;width:65.6px">08:00</div></div>
<div class="row alt" style="top:725.00px"><div class="emp" style="left:124.80000000000001px;width:110.4px">Sook Qureshi</div><div class="bar dk" style="left:454.27px;width:657.20px">8:00 AM - 5:00 PM</div><div class="tt" style="left:1549.6000000000001px;width:65.6px">08:00</div></div>
<div class="row" style="top:750.00px"><div class="emp" style="left:124.80000000000001px;width:110.4px">Brent Pawle</div><div class="bar lt" style="left:454.27px;width:657.20px">8:00 AM - 5:00 PM</div><div class="tt" style="left:1549.6000000000001px;width:65.6px">08:00</div></div>
<div class="mc" style="left:0;width:49.6px;top:0.00px;height:425.00px;line-height:423.20px">New York</div>
<div class="mc alt" style="left:0;width:49.6px;top:425.00px;height:350.00px;line-height:348.20px">Seattle</div>
<div class="mc" style="left:49.6px;width:75.2px;top:0.00px;height:175.00px;line-height:173.20px">Administration</div>
<div class="mc alt" style="left:49.6px;width:75.2px;top:175.00px;height:100.00px;line-height:98.20px">Construction</div>
<div class="mc" style="left:49.6px;width:75.2px;top:275.00px;height:150.00px;line-height:148.20px">Sales</div>
<div class="mc alt" style="left:49.6px;width:75.2px;top:425.00px;height:25.00px;line-height:23.20px">Administration</div>
<div class="mc" style="left:49.6px;width:75.2px;top:450.00px;height:175.00px;line-height:173.20px">Construction</div>
<div class="mc alt" style="left:49.6px;width:75.2px;top:625.00px;height:125.00px;line-height:123.20px">Inspection</div>
<div class="mc" style="left:49.6px;width:75.2px;top:750.00px;height:25.00px;line-height:23.20px">Sales</div>
</div></div><div class="abs" style="left:260.800px;top:1069.600px;width:1627.800px;height:13.600px;background:#f1f1f1"></div>
<div class="abs" style="left:275.200px;top:1070.400px;width:1596.800px;height:11.600px;background:#c1c1c1"></div>
<svg class="abs" style="left:263px;top:1071px;width:10px;height:11px" viewBox="0 0 10 11" fill="#9a9a9a"><path d="M7.500 1.500v8L2.500 5.500z"/></svg>
<svg class="abs" style="left:1877px;top:1071px;width:10px;height:11px" viewBox="0 0 10 11" fill="#505050"><path d="M2.500 1.500v8l5-4z"/></svg>
<div class="abs" style="left:0;top:1093.800px;width:1920px;height:3px;background:linear-gradient(90deg,#8a8a8a 0,#3a3a3a 6%,#0a0a0a 10.400%,#050505 100%);z-index:9"></div>
<div class="abs" style="left:160px;top:1091.600px;width:24px;height:2.400px;z-index:10;background:repeating-linear-gradient(90deg,#5a6fd0 0,#5a6fd0 3px,transparent 3px,transparent 4.500px)"></div>

</div>
</body></html>
